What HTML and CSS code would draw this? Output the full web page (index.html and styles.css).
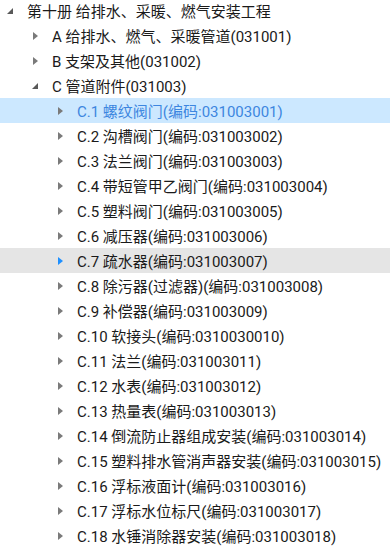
FILE: index.html
```html
<!DOCTYPE html>
<html lang="zh-CN">
<head>
    <meta charset="UTF-8">
    <meta name="viewport" content="width=device-width, initial-scale=1.0">
    <title>第十册 给排水、采暖、燃气安装工程</title>
    <link rel="stylesheet" href="styles.css">
</head>
<body>
    <ul class="tree">
        <li class="node level-0 open"><span class="arrow"></span><span class="label">第十册 给排水、采暖、燃气安装工程</span></li>
        <li class="node level-1"><span class="arrow"></span><span class="label">A 给排水、燃气、采暖管道(031001)</span></li>
        <li class="node level-1"><span class="arrow"></span><span class="label">B 支架及其他(031002)</span></li>
        <li class="node level-1 open"><span class="arrow"></span><span class="label">C 管道附件(031003)</span></li>
        <li class="node level-2 selected"><span class="arrow"></span><span class="label">C.1 螺纹阀门(编码:031003001)</span></li>
        <li class="node level-2"><span class="arrow"></span><span class="label">C.2 沟槽阀门(编码:031003002)</span></li>
        <li class="node level-2"><span class="arrow"></span><span class="label">C.3 法兰阀门(编码:031003003)</span></li>
        <li class="node level-2"><span class="arrow"></span><span class="label">C.4 带短管甲乙阀门(编码:031003004)</span></li>
        <li class="node level-2"><span class="arrow"></span><span class="label">C.5 塑料阀门(编码:031003005)</span></li>
        <li class="node level-2"><span class="arrow"></span><span class="label">C.6 减压器(编码:031003006)</span></li>
        <li class="node level-2 hover"><span class="arrow"></span><span class="label">C.7 疏水器(编码:031003007)</span></li>
        <li class="node level-2"><span class="arrow"></span><span class="label">C.8 除污器(过滤器)(编码:031003008)</span></li>
        <li class="node level-2"><span class="arrow"></span><span class="label">C.9 补偿器(编码:031003009)</span></li>
        <li class="node level-2"><span class="arrow"></span><span class="label">C.10 软接头(编码:0310030010)</span></li>
        <li class="node level-2"><span class="arrow"></span><span class="label">C.11 法兰(编码:031003011)</span></li>
        <li class="node level-2"><span class="arrow"></span><span class="label">C.12 水表(编码:031003012)</span></li>
        <li class="node level-2"><span class="arrow"></span><span class="label">C.13 热量表(编码:031003013)</span></li>
        <li class="node level-2"><span class="arrow"></span><span class="label">C.14 倒流防止器组成安装(编码:031003014)</span></li>
        <li class="node level-2"><span class="arrow"></span><span class="label">C.15 塑料排水管消声器安装(编码:031003015)</span></li>
        <li class="node level-2"><span class="arrow"></span><span class="label">C.16 浮标液面计(编码:031003016)</span></li>
        <li class="node level-2"><span class="arrow"></span><span class="label">C.17 浮标水位标尺(编码:031003017)</span></li>
        <li class="node level-2"><span class="arrow"></span><span class="label">C.18 水锤消除器安装(编码:031003018)</span></li>
    </ul>
</body>
</html>
```

FILE: styles.css
```css
body {
    margin: 0;
    padding: 0;
    background: #ffffff;
    font-family: Roboto, 'Noto Sans CJK SC', sans-serif;
    font-size: 15px;
    color: #1a1a1a;
    overflow: hidden;
}
.tree {
    list-style: none;
    margin: -2px 0 0 0;
    padding: 0;
}
.node {
    display: flex;
    align-items: center;
    height: 25px;
    white-space: nowrap;
}
.level-0 { padding-left: 6px; }
.level-1 { padding-left: 31px; }
.level-2 { padding-left: 56px; }
.arrow {
    width: 8px;
    height: 8px;
    margin-right: 13px;
    flex: none;
    position: relative;
}
/* collapsed: small right-pointing triangle */
.arrow::before {
    content: '';
    position: absolute;
    left: 2px;
    top: 0;
    border-style: solid;
    border-width: 4px 0 4px 5px;
    border-color: transparent transparent transparent #7a7a7a;
}
/* expanded: filled corner triangle */
.open .arrow::before {
    left: 1px;
    top: 1px;
    border-width: 0 0 6px 6px;
    border-color: transparent transparent #595959 transparent;
}
.selected {
    background: #cce8ff;
    color: #3d86e0;
}
.hover {
    background: #e5e5e5;
}
.hover .arrow::before {
    border-left-color: #1e90ff;
}
```
